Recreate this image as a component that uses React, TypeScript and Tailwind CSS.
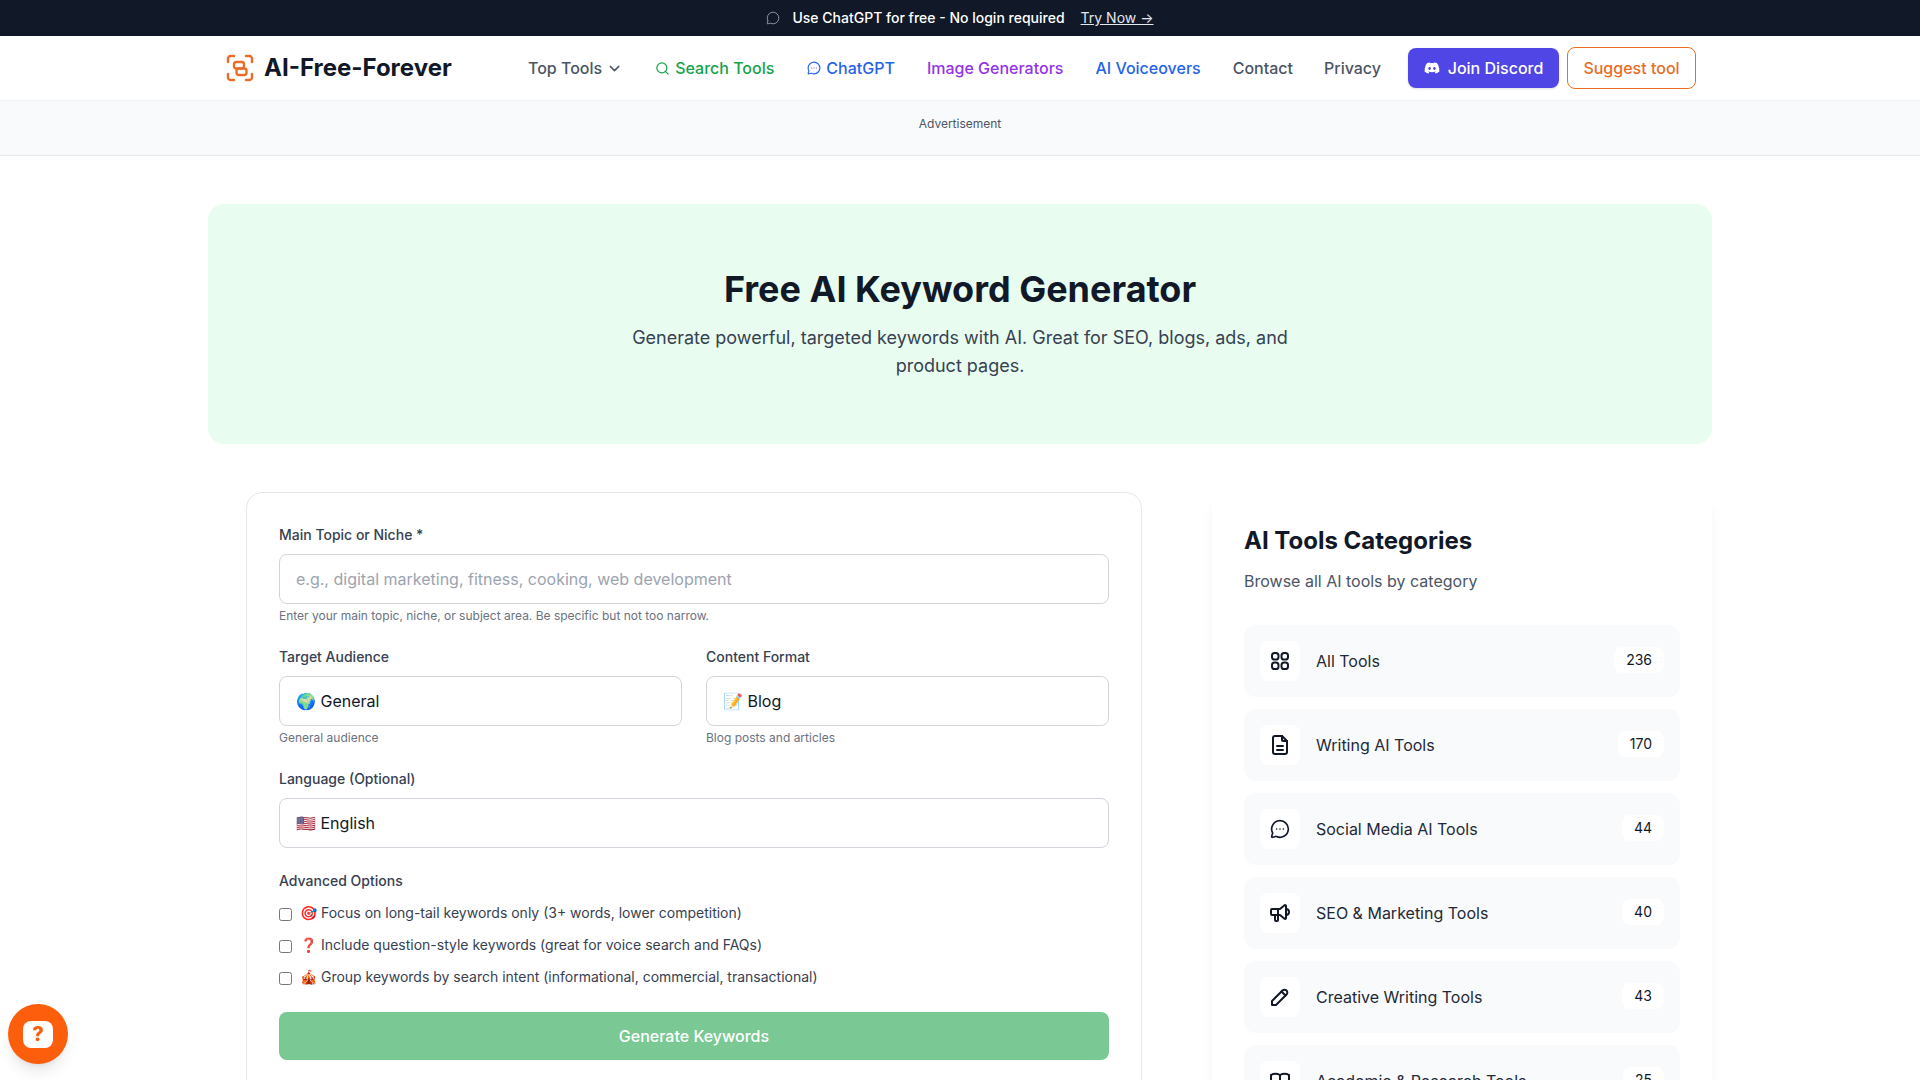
import { ChevronDown, MessageCircle, MessageCircleMore, Search } from 'lucide-react'
import { FaDiscord } from 'react-icons/fa'
import { TbBook, TbFileDescription, TbPencil, TbSpeakerphone } from 'react-icons/tb'

function GridIcon({ className }: { className?: string }) {
  return (
    <svg viewBox="0 0 24 24" className={className} fill="none" stroke="currentColor" strokeWidth="2">
      <rect x="4" y="4" width="6.5" height="6.5" rx="2.6" />
      <rect x="13.5" y="4" width="6.5" height="6.5" rx="2.6" />
      <rect x="4" y="13.5" width="6.5" height="6.5" rx="2.6" />
      <rect x="13.5" y="13.5" width="6.5" height="6.5" rx="2.6" />
    </svg>
  )
}

const CATEGORIES = [
  { name: 'All Tools', count: 236, Icon: GridIcon },
  { name: 'Writing AI Tools', count: 170, Icon: TbFileDescription },
  { name: 'Social Media AI Tools', count: 44, Icon: MessageCircleMore },
  { name: 'SEO & Marketing Tools', count: 40, Icon: TbSpeakerphone },
  { name: 'Creative Writing Tools', count: 43, Icon: TbPencil },
  { name: 'Academic & Research Tools', count: 25, Icon: TbBook },
]

const OPTIONS = [
  '🎯 Focus on long-tail keywords only (3+ words, lower competition)',
  '❓ Include question-style keywords (great for voice search and FAQs)',
  '🎪 Group keywords by search intent (informational, commercial, transactional)',
]

function Logo() {
  return (
    <svg viewBox="0 0 28 28" className="w-7 h-7" fill="none" stroke="#ea6c25" strokeWidth="2.4" strokeLinecap="round" strokeLinejoin="round">
      <path d="M2 8V4.5A2.5 2.5 0 0 1 4.5 2H8" />
      <path d="M20 2h3.5A2.5 2.5 0 0 1 26 4.5V8" />
      <path d="M26 20v3.5a2.5 2.5 0 0 1-2.5 2.5H20" />
      <path d="M8 26H4.5A2.5 2.5 0 0 1 2 23.5V20" />
      <rect x="8" y="8" width="10" height="6.5" rx="2.2" />
      <rect x="10.5" y="14.5" width="10" height="6.5" rx="2.2" />
    </svg>
  )
}

function Field({ label, hint, children }: { label: string; hint?: string; children: React.ReactNode }) {
  return (
    <div>
      <label className="block text-sm font-medium text-[#374151] leading-5 mb-[9px]">{label}</label>
      {children}
      {hint && <p className="mt-1 text-xs leading-4 text-[#6b7280]">{hint}</p>}
    </div>
  )
}

function SelectBox({ value }: { value: string }) {
  return (
    <select className="block w-full h-[50px] px-4 border border-[#d1d5db] rounded-lg bg-white text-base text-[#111827] appearance-none">
      <option>{value}</option>
    </select>
  )
}

export default function App() {
  return (
    <div className="relative h-screen overflow-hidden bg-white font-['Inter',sans-serif] text-[#111827]">
      <div className="h-9 bg-[#111827] text-white text-sm flex items-center justify-center gap-2">
        <MessageCircle className="w-[14px] h-[14px] text-gray-400 mr-1" strokeWidth={1.5} />
        <span className="font-medium">Use ChatGPT for free - No login required</span>
        <a className="ml-2 underline text-gray-200">Try Now →</a>
      </div>

      <header className="h-16 bg-white shadow-[0_1px_2px_rgba(0,0,0,0.05)] relative">
        <div className="w-[1504px] mx-auto h-full px-4 flex items-center justify-between">
          <a className="flex items-center gap-[10px] pl-[2px]">
            <Logo />
            <span className="text-2xl font-bold text-[#111827]">AI-Free-Forever</span>
          </a>
          <nav className="flex items-center text-base font-medium">
            <a className="flex items-center gap-1 text-[#4b5563] mr-8">
              Top Tools <ChevronDown className="w-[17px] h-[17px]" />
            </a>
            <a className="flex items-center gap-[5px] text-[#16a34a] mr-[33px]">
              <Search className="w-[15px] h-[15px]" /> Search Tools
            </a>
            <a className="flex items-center gap-[5px] text-[#2563eb] mr-8">
              <MessageCircleMore className="w-[14px] h-[14px]" /> ChatGPT
            </a>
            <a className="text-[#9333ea] mr-8">Image Generators</a>
            <a className="text-[#2563eb] mr-8">AI Voiceovers</a>
            <a className="text-[#4b5563] mr-[31px]">Contact</a>
            <a className="text-[#4b5563] mr-[27px]">Privacy</a>
            <a className="h-10 w-[151px] flex items-center justify-center gap-2 rounded-lg bg-[#4f46e5] text-white mr-2 shadow-sm">
              <FaDiscord className="w-4 h-4" /> Join Discord
            </a>
            <a className="h-[42px] w-[129px] flex items-center justify-center rounded-lg border border-[#ea6c25] text-[#ea6c25]">Suggest tool</a>
          </nav>
        </div>
      </header>

      <div className="h-14 bg-[#f9fafb] border-b border-[#e5e7eb] pt-4 text-center text-xs leading-4 text-[#4b5563]">
        Advertisement
      </div>

      <main className="w-[1504px] mx-auto pt-12">
        <section className="h-60 rounded-2xl bg-[#e8fdf0] flex flex-col items-center pt-[65px]">
          <h1 className="text-4xl font-bold leading-10 text-[#111827]">Free AI Keyword Generator</h1>
          <p className="mt-[15px] w-[672px] text-center text-lg leading-7 text-[#374151]">
            Generate powerful, targeted keywords with AI. Great for SEO, blogs, ads, and product pages.
          </p>
        </section>

        <div className="flex justify-between pl-[38px] pt-12">
          <section className="w-[896px] h-[700px] rounded-2xl border border-[#e5e7eb] bg-white px-8 pt-8">
            <Field label="Main Topic or Niche *" hint="Enter your main topic, niche, or subject area. Be specific but not too narrow.">
              <input
                placeholder="e.g., digital marketing, fitness, cooking, web development"
                className="block w-full h-[50px] px-4 border border-[#d1d5db] rounded-lg text-base placeholder:text-[#9ca3af]"
              />
            </Field>
            <div className="grid grid-cols-2 gap-x-6 mt-[23px]">
              <Field label="Target Audience" hint="General audience">
                <SelectBox value="🌍 General" />
              </Field>
              <Field label="Content Format" hint="Blog posts and articles">
                <SelectBox value="📝 Blog" />
              </Field>
            </div>
            <div className="mt-[23px]">
              <Field label="Language (Optional)">
                <SelectBox value="🇺🇸 English" />
              </Field>
            </div>
            <p className="mt-[23px] text-sm font-medium leading-5 text-[#374151]">Advanced Options</p>
            <div className="mt-3 flex flex-col gap-3">
              {OPTIONS.map((option) => (
                <label key={option} className="flex items-center gap-2 text-sm leading-5 text-[#374151]">
                  <input type="checkbox" className="w-[13px] h-[13px] mt-[2px]" />
                  <span>{option}</span>
                </label>
              ))}
            </div>
            <button className="mt-[25px] w-full h-12 rounded-lg bg-[#7ac894] text-white text-base font-medium">
              Generate Keywords
            </button>
          </section>

          <aside className="w-[500px] h-[900px] rounded-2xl bg-white px-8 pt-[33px] shadow-[0_10px_15px_-3px_rgba(0,0,0,0.07),0_4px_6px_-4px_rgba(0,0,0,0.07)]">
            <h2 className="text-2xl font-bold leading-8 text-[#111827]">AI Tools Categories</h2>
            <p className="mt-3 text-base leading-6 text-[#4b5563]">Browse all AI tools by category</p>
            <div className="mt-8 flex flex-col gap-3">
              {CATEGORIES.map(({ name, count, Icon }) => (
                <a key={name} className="h-[72px] px-4 flex items-center rounded-xl bg-[#f9fafb]">
                  <span className="w-10 h-10 flex items-center justify-center rounded-lg bg-white">
                    {name === 'Social Media AI Tools' ? (
                      <Icon className="w-5 h-5 text-[#111827]" />
                    ) : (
                      <Icon className="w-6 h-6 text-[#111827]" />
                    )}
                  </span>
                  <span className="ml-4 text-base text-[#1f2937]">{name}</span>
                  <span className="ml-auto -mt-[2px] px-3 py-[3px] rounded-lg bg-white text-sm leading-5 text-[#111827]">{count}</span>
                </a>
              ))}
            </div>
          </aside>
        </div>
      </main>

      <button className="fixed left-2 bottom-4 w-[60px] h-[60px] rounded-full bg-[#fc5e0b] flex items-center justify-center shadow-lg">
        <span className="w-[30px] h-[27px] rounded-lg bg-white flex items-center justify-center text-xl leading-none font-extrabold text-[#fc5e0b]">?</span>
      </button>
    </div>
  )
}
